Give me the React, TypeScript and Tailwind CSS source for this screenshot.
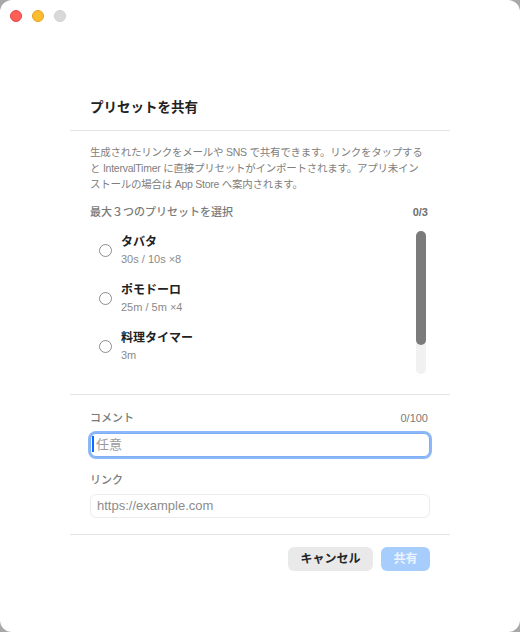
import { useState } from "react";

const presets = [
  { id: "tabata", name: "タバタ", detail: "30s / 10s ×8" },
  { id: "pomodoro", name: "ポモドーロ", detail: "25m / 5m ×4" },
  { id: "cooking", name: "料理タイマー", detail: "3m" },
];

const FONT = { fontFamily: '"Liberation Sans", "Noto Sans CJK JP", sans-serif' };

const App = () => {
  const [selected, setSelected] = useState<string[]>([]);
  const [comment, setComment] = useState("");
  const [link, setLink] = useState("");

  const toggle = (id: string) => {
    setSelected((prev) =>
      prev.includes(id) ? prev.filter((p) => p !== id) : prev.length < 3 ? [...prev, id] : prev
    );
  };

  return (
    <div className="h-[632px] w-[520px] bg-[#a8a8a8]" style={FONT}>
      <div className="flex h-full flex-col rounded-[12px] bg-white">
        {/* title bar */}
        <div className="flex h-[32px] items-center gap-[10px] pl-[10px]">
          <span className="h-[12px] w-[12px] rounded-full bg-[#fe5f57] border border-[#e2463f]" />
          <span className="h-[12px] w-[12px] rounded-full bg-[#febc2e] border border-[#dea123]" />
          <span className="h-[12px] w-[12px] rounded-full bg-[#d9d9d9] border border-[#cfcfcf]" />
        </div>

        {/* sheet */}
        <div className="mx-[70px] mt-[66px] flex flex-col">
          <div className="border-b border-[#e4e4e4] px-[20px] pb-[12px]">
            <h1 className="text-[13.5px] font-bold leading-[20px] text-[#222]">プリセットを共有</h1>
          </div>

          <div className="flex flex-col px-[20px]">
            <p className="mt-[13px] whitespace-nowrap text-[10.5px] leading-[16px] tracking-[-0.25px] text-[#808080]">
              生成されたリンクをメールや SNS で共有できます。リンクをタップする
              <br />
              と IntervalTimer に直接プリセットがインポートされます。アプリ未イン
              <br />
              ストールの場合は App Store へ案内されます。
            </p>

            <div className="mt-[12px] flex items-center justify-between pr-[2px] text-[11px] leading-[16px]">
              <span className="font-medium text-[#7a7a7a]">最大３つのプリセットを選択</span>
              <span className="font-semibold text-[#6e6e6e]">{selected.length}/3</span>
            </div>

            <div className="mt-[10px] flex h-[144px] overflow-hidden">
              <div className="flex flex-1 flex-col pt-[4px]">
                {presets.map((p) => {
                  const on = selected.includes(p.id);
                  return (
                    <button
                      key={p.id}
                      onClick={() => toggle(p.id)}
                      className="flex h-[48px] shrink-0 items-start gap-[9px] pl-[9px] text-left"
                    >
                      <span
                        className={`mt-[10px] flex h-[13px] w-[13px] items-center justify-center rounded-full border ${
                          on ? "border-[#0a84ff] bg-[#0a84ff]" : "border-[#8c8c8c] bg-white"
                        }`}
                      >
                        {on && <span className="h-[5px] w-[5px] rounded-full bg-white" />}
                      </span>
                      <span className="flex flex-col">
                        <span className="text-[12px] font-bold leading-[16px] text-[#222]">{p.name}</span>
                        <span className="mt-[1px] text-[11px] leading-[16px] text-[#8a8a8a]">{p.detail}</span>
                      </span>
                    </button>
                  );
                })}
              </div>
              <div className="mr-[4px] mt-[1px] flex h-[143px] w-[10px] flex-col rounded-full bg-[#f1f1f1]">
                <div className="h-[114px] rounded-full bg-[#7b7b7b]" />
              </div>
            </div>
          </div>

          <div className="mt-[20px] border-t border-[#e4e4e4]" />

          <div className="flex flex-col px-[20px]">
            <div className="mt-[15px] flex items-center justify-between pr-[2px] text-[11px] leading-[16px]">
              <span className="font-medium text-[#7a7a7a]">コメント</span>
              <span className="text-[#7a7a7a]">{comment.length}/100</span>
            </div>
            <div className="relative mt-[6px]">
              <input
                value={comment}
                maxLength={100}
                onChange={(e) => setComment(e.target.value)}
                placeholder="任意"
                className="h-[24px] w-full rounded-[6px] border border-[#7eaef5] bg-white px-[5px] text-[13px] text-[#222] shadow-[0_0_0_2px_#8db8f7] outline-none placeholder:text-[#9a9a9a]"
              />
              {comment.length === 0 && (
                <span className="absolute left-[2px] top-[4px] h-[16px] w-[1.5px] bg-[#0a6cff]" />
              )}
            </div>

            <span className="mt-[15px] text-[11px] font-medium leading-[16px] text-[#7a7a7a]">リンク</span>
            <input
              value={link}
              onChange={(e) => setLink(e.target.value)}
              placeholder="https://example.com"
              className="mt-[6px] h-[24px] w-full rounded-[6px] border border-[#ececec] bg-white px-[6px] text-[13px] text-[#222] outline-none placeholder:text-[#8c8c8c]"
            />
          </div>

          <div className="mt-[16px] border-t border-[#e4e4e4]" />

          <div className="mt-[12px] flex justify-end gap-[8px] px-[20px]">
            <button className="h-[24px] w-[85px] rounded-[6px] bg-[#e9e9e9] text-[12px] font-semibold text-[#262626]">
              キャンセル
            </button>
            <button
              disabled={selected.length === 0}
              className="h-[24px] w-[49px] rounded-[6px] bg-[#a7cdfc] text-[12px] font-semibold text-[#eaf3ff]"
            >
              共有
            </button>
          </div>
        </div>
      </div>
    </div>
  );
};

export default App;
